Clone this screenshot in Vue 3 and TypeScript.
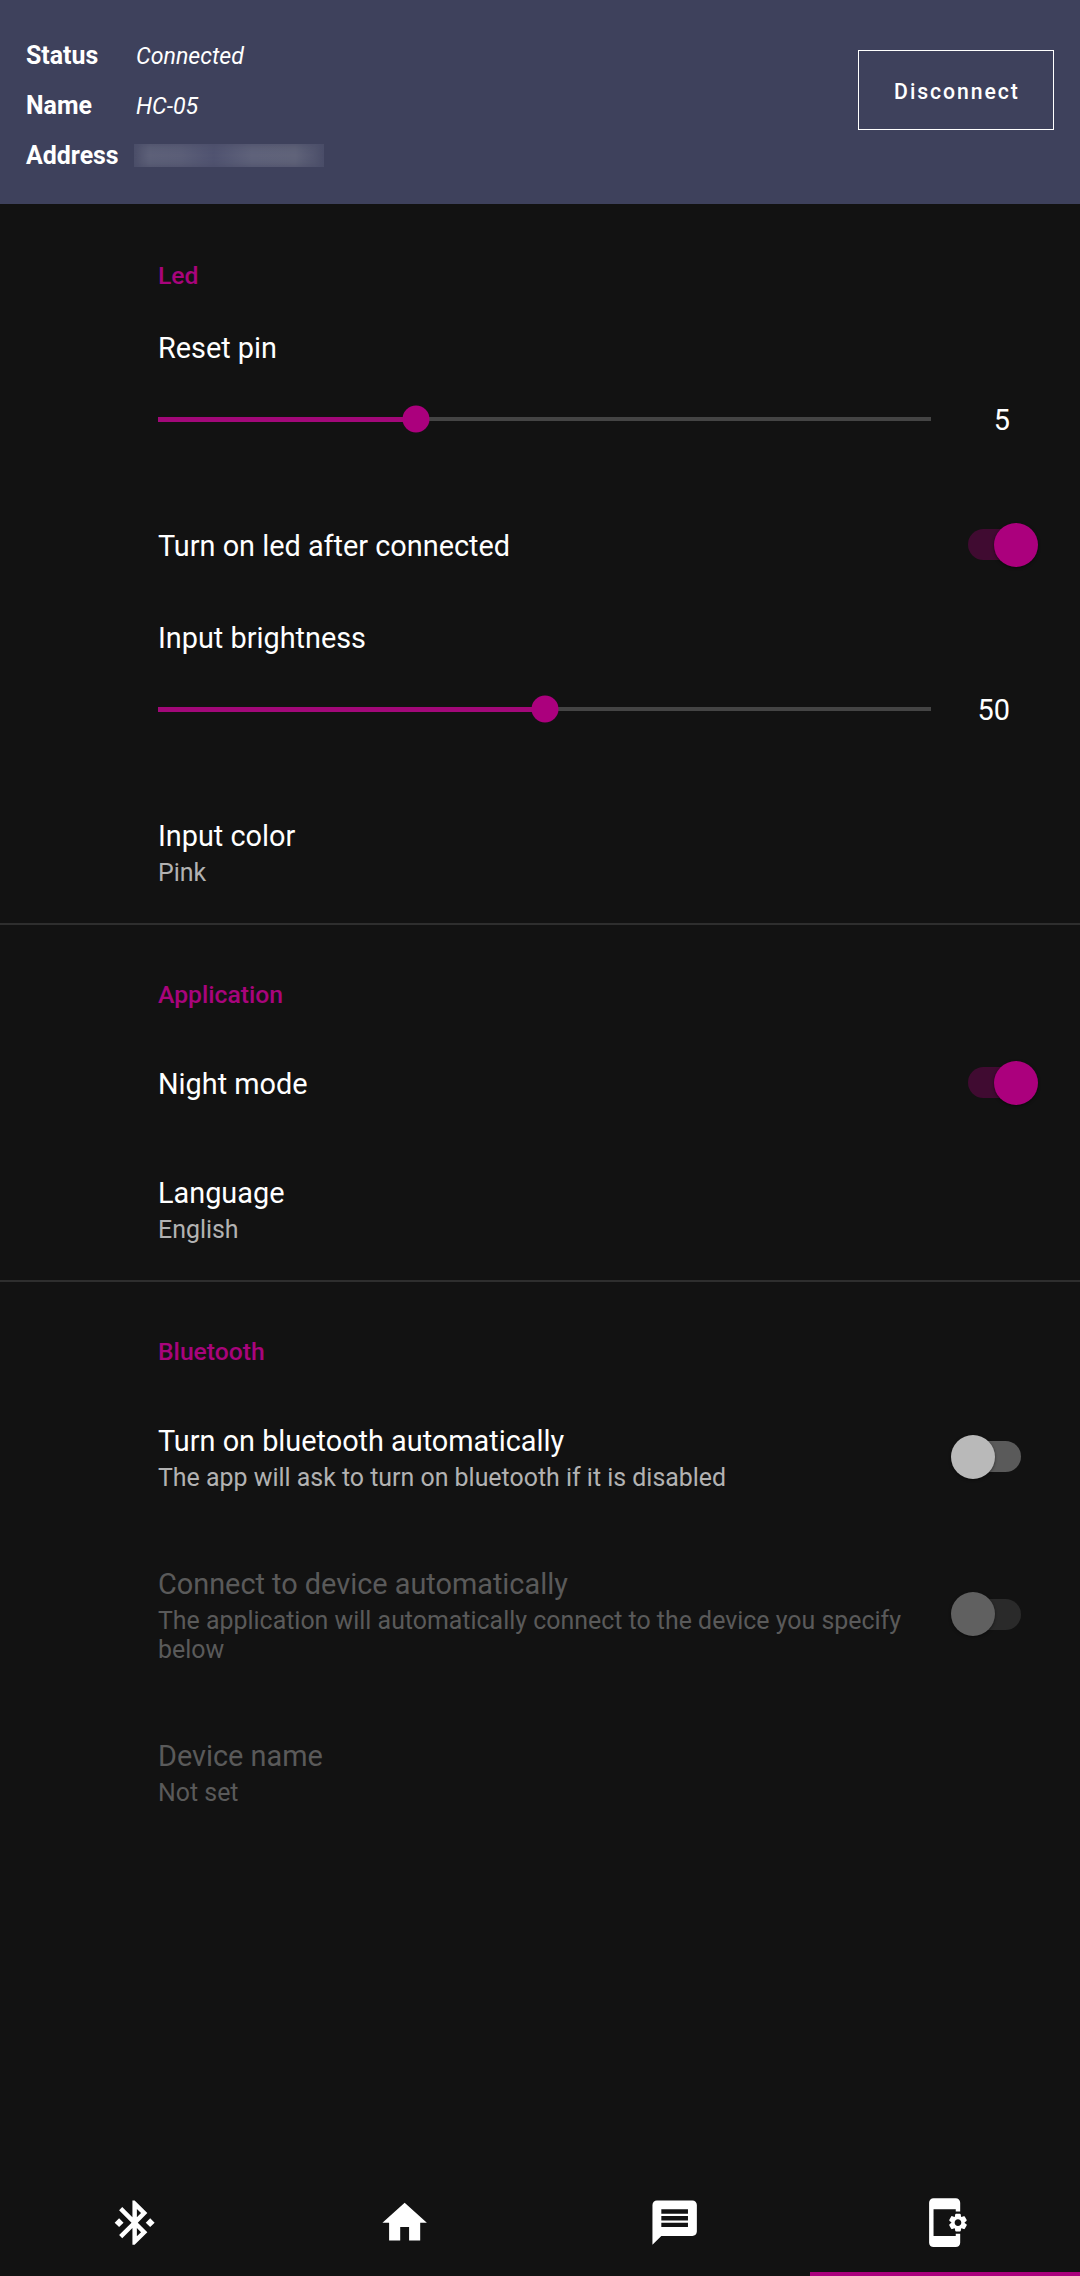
<script setup lang="ts">
import { reactive, ref } from 'vue'

interface Pref {
  kind: 'slider' | 'switch' | 'plain'
  title: string
  summary?: string
  value?: number
  max?: number
  on?: boolean
  disabled?: boolean
}

interface Section {
  name: string
  items: Pref[]
}

const sections = reactive<Section[]>([
  {
    name: 'Led',
    items: [
      { kind: 'slider', title: 'Reset pin', value: 5, max: 15 },
      { kind: 'switch', title: 'Turn on led after connected', on: true },
      { kind: 'slider', title: 'Input brightness', value: 50, max: 100 },
      { kind: 'plain', title: 'Input color', summary: 'Pink' },
    ],
  },
  {
    name: 'Application',
    items: [
      { kind: 'switch', title: 'Night mode', on: true },
      { kind: 'plain', title: 'Language', summary: 'English' },
    ],
  },
  {
    name: 'Bluetooth',
    items: [
      {
        kind: 'switch',
        title: 'Turn on bluetooth automatically',
        summary: 'The app will ask to turn on bluetooth if it is disabled',
        on: false,
      },
      {
        kind: 'switch',
        title: 'Connect to device automatically',
        summary: 'The application will automatically connect to the device you specify below',
        on: false,
        disabled: true,
      },
      { kind: 'plain', title: 'Device name', summary: 'Not set', disabled: true },
    ],
  },
])

const tabs = [
  {
    id: 'bluetooth',
    path: 'M7 12l-2-2-2 2 2 2 2-2zm10.71-4.29L12 2h-1v7.59L6.41 5 5 6.41 10.59 12 5 17.59 6.41 19 11 14.41V22h1l5.71-5.71-4.3-4.29 4.3-4.29zM13 5.83l1.88 1.88L13 9.59V5.83zm1.88 10.46L13 18.17v-3.76l1.88 1.88zM19 10l-2 2 2 2 2-2-2-2z',
  },
  { id: 'home', path: 'M10 20v-6h4v6h5v-8h3L12 3 2 12h3v8z' },
  {
    id: 'messages',
    path: 'M20 2H4c-1.1 0-1.99.9-1.99 2L2 22l4-4h14c1.1 0 2-.9 2-2V4c0-1.1-.9-2-2-2zm-2 12H6v-2h12v2zm0-3H6V9h12v2zm0-3H6V6h12v2z',
  },
  {
    id: 'settings',
    path: 'M21.81 12.74l-.82-.63v-.22l.8-.63c.16-.12.2-.34.1-.51l-.85-1.48c-.07-.13-.21-.2-.35-.2-.05 0-.1.01-.15.03l-.95.38c-.08-.05-.11-.07-.19-.11l-.15-1.01c-.03-.21-.2-.36-.4-.36h-1.71c-.2 0-.37.15-.4.34l-.14 1.01c-.03.02-.07.03-.1.05l-.09.06-.95-.38c-.05-.02-.1-.03-.15-.03-.14 0-.27.07-.35.2l-.85 1.48c-.1.17-.06.39.1.51l.8.63v.23l-.8.63c-.16.12-.2.34-.1.51l.85 1.48c.07.13.21.2.35.2.05 0 .1-.01.15-.03l.95-.37c.08.05.12.07.2.11l.15 1.01c.03.2.2.34.4.34h1.71c.2 0 .37-.15.4-.34l.15-1.01c.03-.02.07-.03.1-.05l.09-.06.95.38c.05.02.1.03.15.03.14 0 .27-.07.35-.2l.85-1.48c.1-.17.06-.39-.1-.51zM18 13.5c-.83 0-1.5-.67-1.5-1.5s.67-1.5 1.5-1.5 1.5.67 1.5 1.5-.67 1.5-1.5 1.5zM17 18H7V6h10v1h2V3c0-1.1-.9-2-2-2H7c-1.1 0-2 .9-2 2v18c0 1.1.9 2 2 2h10c1.1 0 2-.9 2-2v-4h-2v1z',
  },
]
const activeTab = ref('settings')

const percent = (p: Pref) => `${((p.value ?? 0) / (p.max ?? 100)) * 100}%`

function toggle(p: Pref) {
  if (p.kind === 'switch' && !p.disabled) p.on = !p.on
}
</script>

<template>
  <div class="screen">
    <header class="device">
      <dl class="info">
        <dt>Status</dt>
        <dd>Connected</dd>
        <dt>Name</dt>
        <dd>HC-05</dd>
        <dt>Address</dt>
        <dd><span class="redacted"></span></dd>
      </dl>
      <button class="disconnect" type="button">Disconnect</button>
    </header>

    <main class="prefs">
      <section v-for="s in sections" :key="s.name" class="section">
        <h2 class="category">{{ s.name }}</h2>
        <div
          v-for="p in s.items"
          :key="p.title"
          class="pref"
          :class="[p.kind, { disabled: p.disabled }]"
          @click="toggle(p)"
        >
          <div class="texts">
            <div class="title">{{ p.title }}</div>
            <div v-if="p.summary" class="summary">{{ p.summary }}</div>
          </div>
          <div v-if="p.kind === 'slider'" class="slider-row">
            <div class="track">
              <div class="fill" :style="{ width: percent(p) }"></div>
              <div class="knob" :style="{ left: percent(p) }"></div>
            </div>
            <span class="value">{{ p.value }}</span>
          </div>
          <div v-if="p.kind === 'switch'" class="toggle" :class="{ on: p.on }">
            <div class="thumb"></div>
          </div>
        </div>
      </section>
    </main>

    <nav class="tabs">
      <button
        v-for="t in tabs"
        :key="t.id"
        type="button"
        class="tab"
        :class="{ active: t.id === activeTab }"
        @click="activeTab = t.id"
      >
        <svg viewBox="0 0 24 24"><path :d="t.path" /></svg>
      </button>
    </nav>
  </div>
</template>

<style>
body {
  background: #121212;
}
</style>

<style scoped>
.screen {
  display: flex;
  flex-direction: column;
  height: 2276px;
  background: #121212;
  color: #fff;
  font-family: Roboto, sans-serif;
  overflow: hidden;
}
.device {
  display: flex;
  justify-content: space-between;
  align-items: flex-start;
  box-sizing: border-box;
  height: 204px;
  padding: 30px 26px 0;
  background: #3e415c;
}
.info {
  display: grid;
  grid-template-columns: 110px auto;
  grid-auto-rows: 50px;
  margin: 1px 0 0;
  line-height: 50px;
}
.info dt {
  font-size: 24.9px;
  font-weight: 700;
}
.info dd {
  margin: 0;
  font-size: 23.2px;
  font-style: italic;
}
.redacted {
  display: block;
  width: 190px;
  height: 23px;
  margin: 13px 0 0 -2px;
  background: linear-gradient(90deg, #4d506a, #5d6078 8%, #5b5e77 25%, #505370 42%, #5f627a 62%, #606379 85%, #4b4e69);
  box-shadow: inset 0 0 8px #4a4d68;
}
.disconnect {
  box-sizing: border-box;
  width: 196px;
  height: 80px;
  margin-top: 20px;
  padding: 2px 0 0 2px;
  border: 1px solid #fff;
  background: none;
  color: #fff;
  font: 500 21.2px Roboto, sans-serif;
  letter-spacing: 1.95px;
}
.prefs {
  flex: 1;
}
.section + .section {
  border-top: 2px solid #2e2e2e;
}
.section + .section .category {
  height: 103px;
  padding-top: 55px;
}
.category {
  box-sizing: border-box;
  height: 105px;
  margin: 0;
  padding: 57px 0 0 158px;
  color: #a8047c;
  font-size: 24.7px;
  font-weight: 500;
  line-height: 30px;
}
.pref {
  display: flex;
  justify-content: space-between;
  align-items: center;
  box-sizing: border-box;
  padding: 39px 59px 35px 158px;
}
.title {
  font-size: 28.85px;
  line-height: 35px;
}
.summary {
  margin-top: 4px;
  padding-bottom: 1px;
  color: #b2b2b2;
  font-size: 24.92px;
  line-height: 29px;
}
.switch .texts {
  width: 756px;
}
.disabled .title,
.disabled .summary {
  color: #5a5a5a;
}
.slider {
  flex-direction: column;
  align-items: stretch;
  justify-content: flex-start;
  height: 181px;
  padding: 22px 70px 0 158px;
}
.slider-row {
  display: flex;
  align-items: center;
  justify-content: space-between;
  height: 40px;
  margin-top: 33px;
}
.track {
  position: relative;
  width: 773px;
  height: 4px;
  background: #444;
}
.fill {
  height: 5px;
  background: #a20879;
}
.knob {
  position: absolute;
  top: 50%;
  width: 27px;
  height: 27px;
  border-radius: 50%;
  background: #ab007d;
  transform: translate(-50%, -50%);
}
.value {
  padding-top: 2px;
  font-size: 28.9px;
  line-height: 40px;
}
.toggle {
  position: relative;
  width: 53px;
  height: 31px;
  margin: -4px 0 0;
  border-radius: 16px;
  background: #5a5a5a;
}
.thumb {
  position: absolute;
  top: -6.5px;
  left: -17.5px;
  width: 44px;
  height: 44px;
  border-radius: 50%;
  background: #b9b9b9;
  box-shadow: 0 1px 3px rgba(0, 0, 0, 0.5);
}
.toggle.on {
  background: #400b31;
}
.toggle.on .thumb {
  left: 25.5px;
  background: #ab007d;
}
.disabled .toggle {
  background: #2a2a2a;
}
.disabled .thumb {
  background: #606060;
}
.tabs {
  display: grid;
  grid-template-columns: repeat(4, 1fr);
  height: 107px;
}
.tab {
  display: flex;
  align-items: center;
  justify-content: center;
  padding: 0;
  border: 0;
  background: none;
}
.tab svg {
  width: 53.3px;
  height: 53.3px;
  fill: #fff;
}
.tab.active {
  box-shadow: inset 0 -4px #ab007d;
}
</style>
